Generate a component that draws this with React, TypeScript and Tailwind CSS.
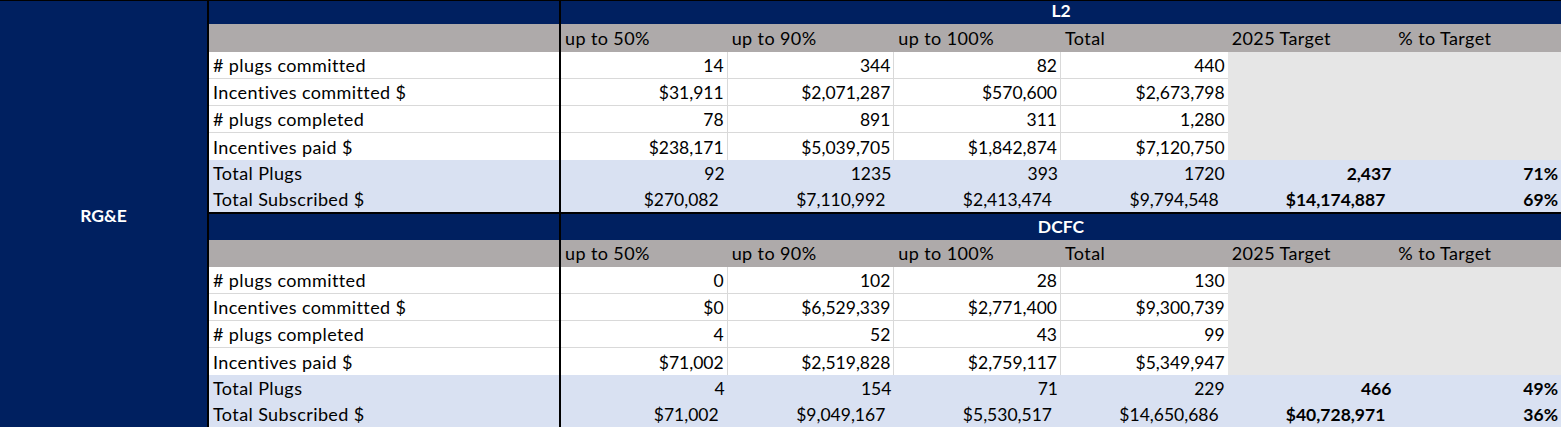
import React from "react";

type Section = {
  title: string;
  rows: string[][];
  totalPlugs: string[];
  totalSub: string[];
};

const sections: Section[] = [
  {
    title: "L2",
    rows: [
      ["# plugs committed", "14", "344", "82", "440"],
      ["Incentives committed $", "$31,911", "$2,071,287", "$570,600", "$2,673,798"],
      ["# plugs completed", "78", "891", "311", "1,280"],
      ["Incentives paid $", "$238,171", "$5,039,705", "$1,842,874", "$7,120,750"],
    ],
    totalPlugs: ["92", "1235", "393", "1720", "2,437", "71%"],
    totalSub: ["$270,082", "$7,110,992", "$2,413,474", "$9,794,548", "$14,174,887", "69%"],
  },
  {
    title: "DCFC",
    rows: [
      ["# plugs committed", "0", "102", "28", "130"],
      ["Incentives committed $", "$0", "$6,529,339", "$2,771,400", "$9,300,739"],
      ["# plugs completed", "4", "52", "43", "99"],
      ["Incentives paid $", "$71,002", "$2,519,828", "$2,759,117", "$5,349,947"],
    ],
    totalPlugs: ["4", "154", "71", "229", "466", "49%"],
    totalSub: ["$71,002", "$9,049,167", "$5,530,517", "$14,650,686", "$40,728,971", "36%"],
  },
];

const headers = ["up to 50%", "up to 90%", "up to 100%", "Total", "2025 Target", "% to Target"];

function Block({ s, first }: { s: Section; first: boolean }) {
  return (
    <div className={first ? "" : "border-t-2 border-black"}>
      {/* title bar */}
      <div className={`flex bg-[#002060] ${first ? "h-[23px]" : "h-[26px]"}`}>
        <div className="w-[352px] shrink-0 border-r-2 border-black" />
        <div className="flex flex-1 items-end justify-center pb-[5px] font-bold text-white">{s.title}</div>
      </div>

      {/* column headers */}
      <div className={`flex bg-[#aeaaaa] ${first ? "h-[28px]" : "h-[27px]"}`}>
        <div className="w-[352px] shrink-0 border-r-2 border-black" />
        <div className="grid flex-1 grid-cols-6">
          {headers.map((h) => (
            <div key={h} className="flex items-end pb-[5px] pl-[4px] text-[18px] tracking-[0.4px]">
              {h}
            </div>
          ))}
        </div>
      </div>

      {/* detail rows */}
      <div className="flex">
        <div className="w-[352px] shrink-0 border-r-2 border-black bg-white">
          {s.rows.map((r, i) => (
            <div
              key={r[0]}
              className={`flex h-[27px] items-end pb-[4px] pl-[4px] text-[18px] tracking-[0.4px] ${
                i < 3 ? "border-b border-[#d9d9d9]" : ""
              }`}
            >
              {r[0]}
            </div>
          ))}
        </div>
        <div className="flex flex-1">
          <div className="basis-4/6 bg-white">
            {s.rows.map((r, i) => (
              <div key={r[0]} className="grid grid-cols-4">
                {r.slice(1).map((v, j) => (
                  <div
                    key={j}
                    className={`flex h-[27px] items-end justify-end pb-[4px] pr-[3px] ${
                      i < 3 ? "border-b border-[#d9d9d9]" : ""
                    } ${j < 3 ? "border-r border-[#d9d9d9]" : ""}`}
                  >
                    {v}
                  </div>
                ))}
              </div>
            ))}
          </div>
          <div className="flex-1 bg-[#e6e6e6]" />
        </div>
      </div>

      {/* totals */}
      <div className="bg-[#d9e1f2]">
        <div className="flex h-[26px]">
          <div className="flex w-[352px] shrink-0 items-end border-r-2 border-black pb-[4px] pl-[4px] text-[18px] tracking-[0.4px]">
            Total Plugs
          </div>
          <div className="grid flex-1 grid-cols-6">
            {s.totalPlugs.map((v, j) => (
              <div key={j} className={`flex items-end justify-end pb-[4px] pr-[3px] ${j > 3 ? "font-bold" : ""}`}>
                {v}
              </div>
            ))}
          </div>
        </div>
        <div className="flex h-[26px]">
          <div className="flex w-[352px] shrink-0 items-end border-r-2 border-black pb-[4px] pl-[4px] text-[18px] tracking-[0.4px]">
            Total Subscribed $
          </div>
          <div className="grid flex-1 grid-cols-6">
            {s.totalSub.map((v, j) => (
              <div
                key={j}
                className={`flex items-end justify-end pb-[4px] ${j > 3 ? "font-bold" : ""} ${j < 5 ? "pr-[9px]" : "pr-[3px]"}`}
              >
                {v}
              </div>
            ))}
          </div>
        </div>
      </div>
    </div>
  );
}

export default function App() {
  return (
    <div className="flex h-[427px] w-[1561px] overflow-hidden border-t border-black font-[family-name:Lato,sans-serif] text-[17.5px] leading-none text-black">
      <div className="flex w-[209px] shrink-0 items-center justify-center border-r-2 border-black bg-[#002060] pt-[3px] font-bold text-white">
        RG&amp;E
      </div>
      <div className="flex-1">
        {sections.map((s, i) => (
          <Block key={s.title} s={s} first={i === 0} />
        ))}
      </div>
    </div>
  );
}
